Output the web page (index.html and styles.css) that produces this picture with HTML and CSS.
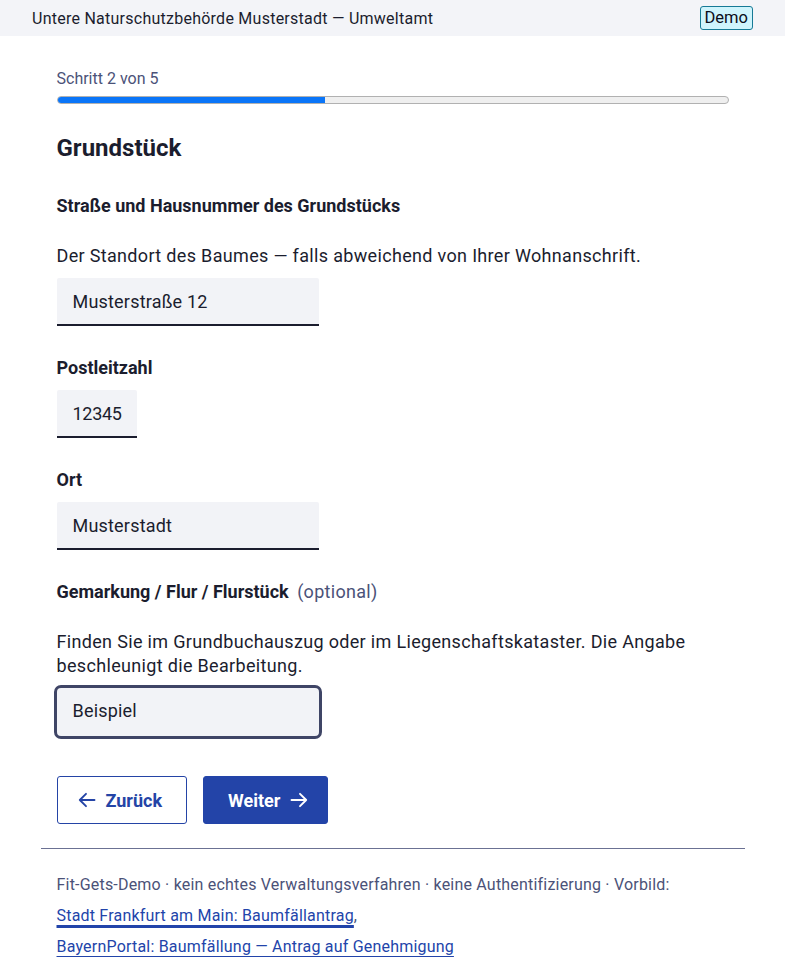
FILE: index.html
```
<!DOCTYPE html>
<html lang="de">
<head>
<meta charset="utf-8">
<title>Grundstück – Baumfällantrag</title>
<link rel="stylesheet" href="styles.css">
</head>
<body>
<div class="app">
<header class="topbar">
  <span class="topbar-title">Untere Naturschutzbehörde Musterstadt — Umweltamt</span>
  <span class="badge">Demo</span>
</header>
<main class="page">
  <div class="step">Schritt 2 von 5</div>
  <div class="progress"><div class="progress-fill" style="width:40%"></div></div>
  <h1 class="title">Grundstück</h1>
  <form class="form">
    <div class="field">
      <label class="label" for="strasse">Straße und Hausnummer des Grundstücks</label>
      <p class="hint">Der Standort des Baumes — falls abweichend von Ihrer Wohnanschrift.</p>
      <input class="input input-wide" id="strasse" type="text" value="Musterstraße 12">
    </div>
    <div class="field">
      <label class="label" for="plz">Postleitzahl</label>
      <input class="input input-short" id="plz" type="text" value="12345">
    </div>
    <div class="field">
      <label class="label" for="ort">Ort</label>
      <input class="input input-wide" id="ort" type="text" value="Musterstadt">
    </div>
    <div class="field">
      <label class="label" for="flur">Gemarkung / Flur / Flurstück <span class="optional">(optional)</span></label>
      <p class="hint">Finden Sie im Grundbuchauszug oder im Liegenschaftskataster. Die Angabe beschleunigt die Bearbeitung.</p>
      <input class="input input-wide is-focused" id="flur" type="text" value="Beispiel">
    </div>
    <div class="actions">
      <button class="btn btn-secondary" type="button">
        <svg class="btn-icon" viewBox="0 0 18 18" aria-hidden="true"><path d="M16.5 9H1.8M8 2.8 1.8 9 8 15.2" fill="none" stroke="currentColor" stroke-width="1.9" stroke-linecap="round" stroke-linejoin="round"/></svg>
        <span>Zurück</span>
      </button>
      <button class="btn btn-primary" type="button">
        <span>Weiter</span>
        <svg class="btn-icon" viewBox="0 0 18 18" aria-hidden="true"><path d="M1.5 9h14.7M10 2.8 16.2 9 10 15.2" fill="none" stroke="currentColor" stroke-width="1.9" stroke-linecap="round" stroke-linejoin="round"/></svg>
      </button>
    </div>
  </form>
  <footer class="footer">
    <p class="footer-text">Fit-Gets-Demo · kein echtes Verwaltungsverfahren · keine Authentifizierung · Vorbild: <a class="link link-active" href="#">Stadt Frankfurt am Main: Baumfällantrag</a>, <a class="link" href="#">BayernPortal: Baumfällung — Antrag auf Genehmigung</a></p>
  </footer>
</main>
</div>
</body>
</html>
```
FILE: styles.css
```
body {
  margin: 0;
  font-family: Roboto, "Noto Sans", sans-serif;
  color: #1b1d2e;
  background: #fff;
}
.app {
  max-width: 785px;
}
.topbar {
  height: 36px;
  background: #f3f4f8;
  display: flex;
  align-items: center;
  justify-content: space-between;
  padding: 0 32px;
  font-size: 16px;
}
.topbar-title {
  letter-spacing: 0.25px;
}
.badge {
  display: inline-block;
  line-height: 22px;
  padding: 0 4px;
  background: #cff4fc;
  border: 1px solid #167a96;
  border-radius: 3px;
  color: #0b0d1a;
  font-size: 16.5px;
}
.page {
  max-width: 672px;
  margin: 0 auto;
  padding: 31px 16px 60px;
}
.step {
  font-size: 16px;
  line-height: 24px;
  color: #4b5278;
}
.progress {
  margin-top: 5px;
  height: 8px;
  box-sizing: border-box;
  border: 1px solid #b1b1b1;
  border-radius: 4px;
  background: #efefef;
  overflow: hidden;
}
.progress-fill {
  height: 100%;
  background: #0a75f8;
  margin: -1px 0 0 -1px;
  padding-bottom: 2px;
}
.title {
  margin: 29px 0 0;
  font-size: 24px;
  line-height: 30px;
  font-weight: 700;
}
.form {
  margin-top: 31px;
}
.field {
  margin-bottom: 30px;
}
.label {
  display: block;
  font-size: 18px;
  line-height: 24px;
  font-weight: 700;
  margin-bottom: 10px;
}
.optional {
  font-weight: 400;
  color: #4b5278;
  margin-left: 4px;
  letter-spacing: 0.3px;
}
.hint {
  margin: 26px 0 10px;
  font-size: 18px;
  line-height: 24px;
  letter-spacing: 0.33px;
}
.input {
  display: block;
  box-sizing: border-box;
  height: 48px;
  padding: 0 16px;
  border: none;
  border-bottom: 2px solid #1b1d2e;
  border-radius: 2px 2px 0 0;
  background: #f2f3f7;
  font: inherit;
  font-size: 18px;
  letter-spacing: 0.2px;
  color: #1b1d2e;
}
.input-wide {
  width: 262px;
}
.input-short {
  width: 80px;
  padding-right: 6px;
  letter-spacing: -0.3px;
}
.is-focused {
  border: none;
  outline: 3px solid #3f4566;
  border-radius: 4px;
  padding-bottom: 3px;
}
.actions {
  display: flex;
  gap: 16px;
  margin-top: 40px;
}
.btn {
  display: inline-flex;
  align-items: center;
  gap: 10px;
  height: 48px;
  box-sizing: border-box;
  border-radius: 3px;
  font-family: inherit;
  font-size: 18px;
  font-weight: 700;
  cursor: pointer;
}
.btn-icon {
  width: 18px;
  height: 18px;
}
.btn-secondary {
  background: #fff;
  color: #2444a6;
  border: 1px solid #2444a6;
  padding: 0 24px 0 20px;
}
.btn-primary {
  background: #2344a8;
  color: #fff;
  border: 1px solid #2344a8;
  padding: 0 19px 0 24px;
}
.footer {
  margin: 24px -16px 0;
  border-top: 1px solid #6b7193;
  padding: 20px 16px 0;
}
.footer-text {
  margin: 0;
  font-size: 16px;
  line-height: 31px;
  letter-spacing: 0.2px;
  color: #4b5278;
}
.link {
  display: inline-block;
  color: #2244aa;
  text-decoration: underline;
  text-decoration-thickness: 1px;
  text-underline-offset: 4px;
}
.link-active {
  text-decoration-thickness: 3px;
}
```
